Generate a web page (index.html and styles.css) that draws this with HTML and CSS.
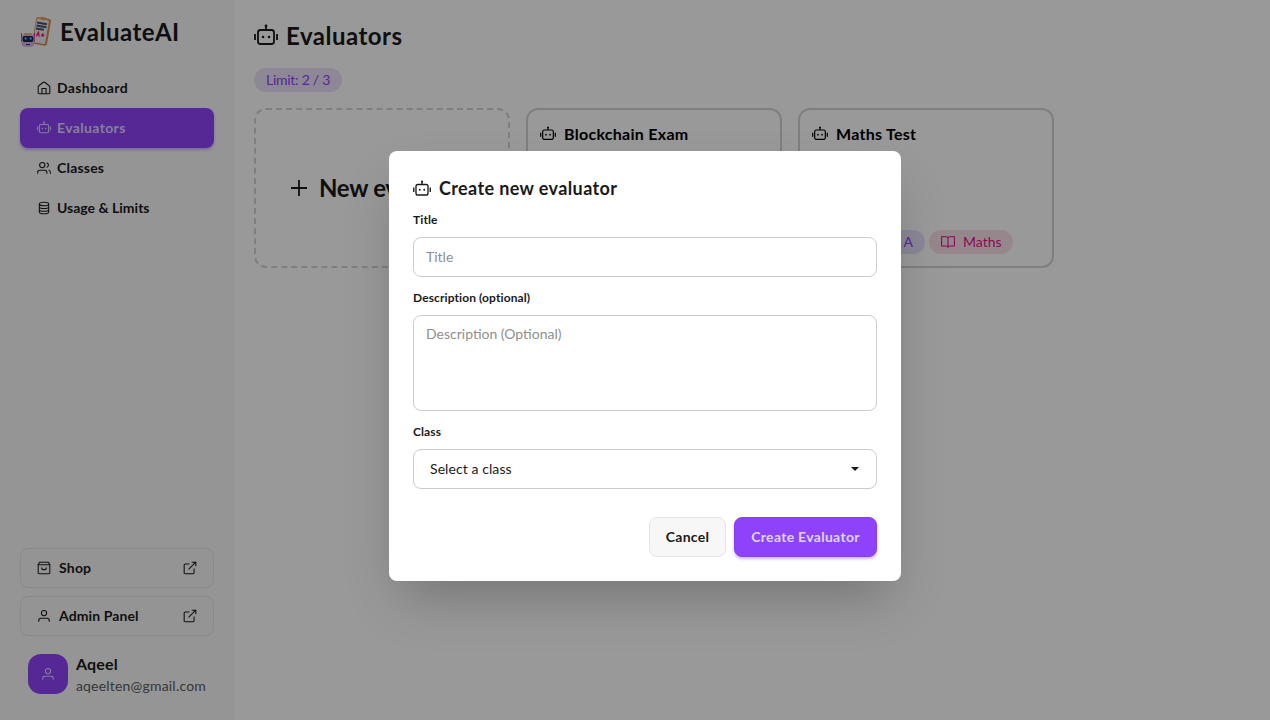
FILE: index.html
```html
<!DOCTYPE html>
<html lang="en">
<head>
<meta charset="utf-8">
<title>EvaluateAI</title>
<link rel="stylesheet" href="styles.css">
</head>
<body>
<svg class="defs" width="0" height="0">
  <symbol id="bot" viewBox="0 0 24 24"><rect x="4" y="6" width="16" height="14" rx="2.5"/><path d="M12 6V2M1 10v6M23 10v6"/><circle class="dot" cx="12" cy="2" r="1.4"/><circle class="dot" cx="9" cy="13" r="1.3"/><circle class="dot" cx="15" cy="13" r="1.3"/></symbol>
  <symbol id="home" viewBox="0 0 24 24"><path d="M2 10.500a3 3 0 0 1 1.200-2.400l7-5.500a3 3 0 0 1 3.600 0l7 5.500a3 3 0 0 1 1.200 2.400V20a2 2 0 0 1-2 2H4a2 2 0 0 1-2-2zM8.500 22v-9h7v9"/></symbol>
  <symbol id="users" viewBox="0 0 24 24"><circle cx="9" cy="7" r="4.500"/><path d="M1 22v-2a4 4 0 0 1 4-4h8a4 4 0 0 1 4 4v2M16.500 2.800a4.400 4.400 0 0 1 0 8.400M20 15.500c2 .8 3 2.500 3 4.500v2"/></symbol>
  <symbol id="coins" viewBox="0 0 24 24"><ellipse cx="12" cy="5" rx="8" ry="3"/><path d="M4 5v14c0 1.700 3.600 3 8 3s8-1.300 8-3V5M4 9.700c0 1.700 3.600 3 8 3s8-1.300 8-3M4 14.400c0 1.700 3.600 3 8 3s8-1.300 8-3"/></symbol>
  <symbol id="bag" viewBox="0 0 24 24"><path d="M4.500 2h15L22 6v14a2 2 0 0 1-2 2H4a2 2 0 0 1-2-2V6zM2 6.500h20M16 11a4 4 0 0 1-8 0"/></symbol>
  <symbol id="user" viewBox="0 0 24 24"><circle cx="12" cy="7" r="4.500"/><path d="M3 22v-2a4 4 0 0 1 4-4h10a4 4 0 0 1 4 4v2"/></symbol>
  <symbol id="ext" viewBox="0 0 24 24"><path d="M19 13v7a2 2 0 0 1-2 2H4a2 2 0 0 1-2-2V7a2 2 0 0 1 2-2h7M15 2h7v7M9.500 14.500L22 2"/></symbol>
  <symbol id="plus" viewBox="0 0 24 24"><path d="M12 4v16M4 12h16"/></symbol>
  <symbol id="book" viewBox="0 0 24 24"><path d="M12 6a3 3 0 0 0-3-3H1v16h8a3 3 0 0 1 3 3 3 3 0 0 1 3-3h8V3h-8a3 3 0 0 0-3 3zM12 6v16"/></symbol>
</svg>
<div class="app">
  <aside class="sidebar">
    <div class="brand">
      <svg class="logo" viewBox="0 0 32 32">
        <g transform="rotate(10 22 16)"><rect x="14" y="2" width="15" height="27" rx="2" fill="#d98a45"/><rect x="14.800" y="3.500" width="12.200" height="24" rx="1" fill="#eceaf2"/><rect x="18" y="1" width="6" height="3" rx="1" fill="#e4a254"/><path d="M15.500 7.500h10M15.500 10.500h10M15.500 13.500h8" stroke="#46506f" stroke-width="2"/><path d="M17 21l1.500-4 1.500 4M21.500 19h3.500M23.200 17.300v3.400" stroke="#ee2173" stroke-width="1.400" fill="none"/></g>
        <path d="M1.500 17v9M14.500 17v9" stroke="#d82a7d"/><rect x="1.500" y="18" width="13" height="13" rx="4" fill="#d3b6e6"/><path d="M4 18h8" stroke="#e6a85c" stroke-width="1.500"/><rect x="2.500" y="20" width="11" height="6" rx="2" fill="#20264a"/><circle cx="5.700" cy="22.500" r="1.200" fill="#4fb8ed"/><circle cx="10.700" cy="22.500" r="1.200" fill="#4fb8ed"/><path d="M6 28.500h4" stroke="#3a3156"/>
      </svg>
      <span class="brand-name">EvaluateAI</span>
    </div>
    <nav class="nav">
      <a class="nav-item"><svg class="ic"><use href="#home"/></svg><span class="t-dash">Dashboard</span></a>
      <a class="nav-item active"><svg class="ic"><use href="#bot"/></svg><span class="t-eval">Evaluators</span></a>
      <a class="nav-item"><svg class="ic"><use href="#users"/></svg><span class="t-classes">Classes</span></a>
      <a class="nav-item"><svg class="ic"><use href="#coins"/></svg><span class="t-usage">Usage &amp; Limits</span></a>
    </nav>
    <div class="side-foot">
      <a class="link-btn"><svg class="ic"><use href="#bag"/></svg><span class="t-shop">Shop</span><svg class="ic end"><use href="#ext"/></svg></a>
      <a class="link-btn"><svg class="ic"><use href="#user"/></svg><span class="t-admin">Admin Panel</span><svg class="ic end"><use href="#ext"/></svg></a>
      <div class="profile">
        <div class="avatar"><svg class="ic"><use href="#user"/></svg></div>
        <div class="who"><span class="name">Aqeel</span><span class="mail">aqeelten@gmail.com</span></div>
      </div>
    </div>
  </aside>
  <main class="main">
    <h1 class="page-title"><svg class="ic big"><use href="#bot"/></svg><span class="t-head">Evaluators</span></h1>
    <span class="badge limit">Limit: 2 / 3</span>
    <div class="cards">
      <div class="card new"><svg class="ic plus"><use href="#plus"/></svg><span>New evaluator</span></div>
      <div class="card"><div class="card-title"><svg class="ic mid"><use href="#bot"/></svg><span class="t-block">Blockchain Exam</span></div></div>
      <div class="card"><div class="card-title"><svg class="ic mid"><use href="#bot"/></svg><span class="t-maths">Maths Test</span></div>
        <div class="tags"><span class="badge section"><svg class="ic"><use href="#users"/></svg>Class 10 A</span><span class="badge subject"><svg class="ic"><use href="#book"/></svg><span class="t-subj">Maths</span></span></div>
      </div>
    </div>
  </main>
</div>
<div class="overlay">
  <form class="modal">
    <h3 class="modal-title"><svg class="ic m18"><use href="#bot"/></svg><span class="t-create">Create new evaluator</span></h3>
    <label class="label l-title" for="title">Title</label>
    <input class="field input" id="title" placeholder="Title">
    <label class="label l-desc" for="desc">Description (optional)</label>
    <textarea class="field area" id="desc" placeholder="Description (Optional)"></textarea>
    <label class="label l-class">Class</label>
    <div class="field select"><span>Select a class</span><svg class="caret" viewBox="0 0 8 4"><path d="M0 0h8L4 4z"/></svg></div>
    <div class="actions"><button type="button" class="btn cancel">Cancel</button><button type="button" class="btn primary">Create Evaluator</button></div>
  </form>
</div>
</body>
</html>
```
FILE: styles.css
```css
* { box-sizing: border-box; }
body { margin: 0; height: 720px; overflow: hidden; background: #fff; color: #1a1a1a; font-family: Lato, "Liberation Sans", sans-serif; font-size: 14px; line-height: 20px; white-space: nowrap; }
.defs { position: absolute; }
.ic { width: 14px; height: 14px; flex: none; fill: none; stroke: currentColor; stroke-width: 1.8; }
.dot { fill: currentColor; stroke: none; }
.app { display: flex; height: 720px; }
.sidebar { width: 234px; padding: 16px 20px 18px; background: #f8f8fb; display: flex; flex-direction: column; }
.brand { display: flex; align-items: center; gap: 8px; height: 32px; margin-bottom: 20px; }
.logo { width: 32px; height: 32px; }
.brand-name { font-size: 24px; font-weight: 700; letter-spacing: .5px; }
.nav { display: flex; flex-direction: column; }
.nav-item { display: flex; align-items: center; gap: 6px; height: 40px; padding: 0 17px; border-radius: 8px; font-weight: 700; }
.t-dash, .t-eval { letter-spacing: .36px; }
.t-classes, .t-shop { letter-spacing: .2px; }
.t-admin { letter-spacing: .1px; }
.active { background: #8e43fb; color: #ddd5ff; box-shadow: 0 2px 3px rgba(142, 67, 251, .4); }
.side-foot { margin-top: auto; display: flex; flex-direction: column; gap: 8px; }
.link-btn { display: flex; align-items: center; gap: 8px; height: 40px; padding: 0 16px; border: 1px solid #e6e6e8; border-radius: 8px; background: #f7f7f7; font-weight: 700; }
.end { margin-left: auto; }
.profile { display: flex; align-items: center; gap: 8px; height: 58px; padding: 8px 8px 6px; }
.avatar { width: 40px; height: 40px; border-radius: 13px; background: #8e43fb; color: #ddd5ff; display: flex; align-items: center; justify-content: center; }
.who { display: flex; flex-direction: column; padding-top: 2px; }
.name { font-size: 16px; font-weight: 700; line-height: 22px; letter-spacing: .2px; }
.mail { color: #5c5c5c; line-height: 22px; letter-spacing: .2px; }
.main { flex: 1; padding: 20px; display: flex; flex-direction: column; align-items: flex-start; }
.page-title { margin: 0 0 16px; height: 32px; display: flex; align-items: center; gap: 8px; font-size: 24px; font-weight: 700; letter-spacing: .5px; }
.big { width: 24px; height: 24px; }
.badge { height: 24px; border-radius: 12px; padding: 0 12px; display: flex; align-items: center; gap: 8px; }
.limit { width: 88px; background: #ebe2fb; color: #8e43fb; letter-spacing: -.27px; }
.cards { margin-top: 16px; display: flex; gap: 16px; }
.card { width: 256px; height: 160px; border: 2px solid #d1d5db; border-radius: 12px; padding: 12px; display: flex; flex-direction: column; justify-content: space-between; }
.new { border-style: dashed; flex-direction: row; justify-content: flex-start; align-items: center; gap: 8px; padding-left: 31px; font-size: 24px; font-weight: 700; letter-spacing: -.3px; }
.plus { width: 24px; height: 24px; }
.card-title { display: flex; align-items: center; gap: 8px; height: 24px; font-size: 16px; font-weight: 700; color: #000; letter-spacing: .28px; }
.mid { width: 16px; height: 16px; }
.tags { display: flex; justify-content: flex-end; gap: 4px; width: 201px; }
.section { background: #e8e2fa; color: #8e43fb; }
.subject { width: 84px; background: #fae2ea; color: #e4108a; }
.overlay { position: absolute; inset: 0; background: rgba(0, 0, 0, .4); padding: 151px 369px 0 389px; }
.modal { height: 430px; padding: 24px; background: #fff; border-radius: 8px; box-shadow: 0 25px 50px -12px rgba(0, 0, 0, .25); display: flex; flex-direction: column; }
.modal-title { margin: 0; height: 28px; display: flex; align-items: center; gap: 8px; font-size: 18px; font-weight: 700; letter-spacing: .38px; }
.t-create { padding-bottom: 2px; }
.m18 { width: 18px; height: 18px; }
.label { font-size: 12px; font-weight: 700; line-height: 16px; letter-spacing: .1px; }
.l-title { margin: 9px 0; }
.l-desc { margin: 13px 0 9px; }
.l-class { margin: 13px 0 9px; }
.field { width: 464px; height: 40px; margin: 0; border: 1px solid #ccc; border-radius: 8px; padding: 0 12px; background: #fff; color: #1a1a1a; font: inherit; }
.field::placeholder { color: #8f8f8f; opacity: 1; }
.input { padding-bottom: 2px; }
.area { height: 96px; padding-top: 8px; resize: none; background: linear-gradient(#555, #555) no-repeat right 1px bottom 1px / 1px 1px #fff; }
.select { display: flex; align-items: center; justify-content: space-between; padding: 0 17px 0 16px; letter-spacing: .08px; }
.caret { width: 8px; height: 4px; fill: #1a1a1a; }
.actions { margin-top: 28px; display: flex; justify-content: flex-end; gap: 8px; }
.btn { height: 40px; border-radius: 8px; padding: 0; font: inherit; font-weight: 700; color: #1a1a1a; letter-spacing: .3px; }
.cancel { width: 77px; border: 1px solid #e5e5e5; background: #f7f7f7; }
.primary { width: 143px; border: 1px solid #8540ef; background: #8e43fb; color: #ddd5ff; box-shadow: 0 2px 3px rgba(142, 67, 251, .4); }
```
